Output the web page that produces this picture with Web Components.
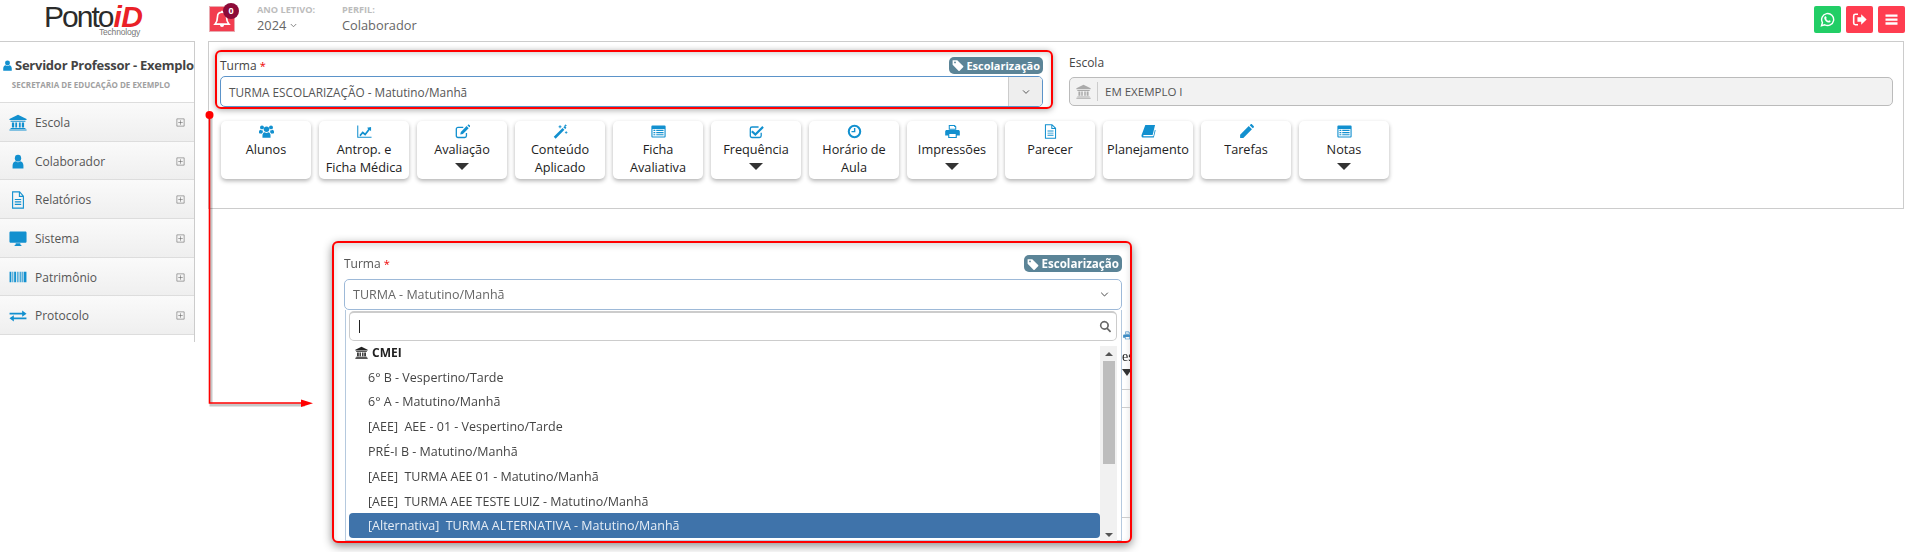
<!DOCTYPE html>
<html lang="pt-BR">
<head>
<meta charset="utf-8">
<title>Ponto iD</title>
<style>
html,body{margin:0;padding:0;height:552px;overflow:hidden;background:#fff}
body{font-family:"Open Sans","Liberation Sans",sans-serif;color:#333}
</style>
</head>
<body>
<pid-app></pid-app>

<script>
const ICONS = {
  user: '<circle cx="8" cy="4.4" r="3.6"/><path d="M1.8 15.5v-3.2c0-2.6 1.6-4.3 3.5-4.6a4.2 4.2 0 0 0 5.4 0c1.9.3 3.5 2 3.5 4.6v3.2z"/>',
  bank: '<path d="M8 .8 15.6 4.6V5.6H.4V4.6z"/><path d="M1.4 6.4h13.2v1H1.4zM2.6 8h2v4.6h-2zM5.6 8h1.6v4.6H5.6zM8.8 8h1.6v4.6H8.8zM11.4 8h2v4.6h-2zM1.4 13.2h13.2v1H1.4zM.4 14.6h15.2v1H.4z"/>',
  file: '<path fill="none" stroke="currentColor" stroke-width="1.1" d="M2.6.8h7l3.8 3.8v10.6H2.6zM9.4 1v3.8h3.8"/><path d="M4.8 7h6.4v1H4.8zM4.8 9.2h6.4v1H4.8zM4.8 11.4h6.4v1H4.8z"/>',
  desktop: '<path d="M1.6 1.4h12.8c.7 0 1.2.5 1.2 1.2v8.2c0 .7-.5 1.2-1.2 1.2H1.6c-.7 0-1.2-.5-1.2-1.2V2.6c0-.7.5-1.2 1.2-1.2zM6 12.4h4l.3 1.6H11v1H5v-1h.7z"/>',
  barcode: '<path d="M.5 2h1.6v12H.5zM3 2h.8v12H3zM4.6 2h1.6v12H4.6zM7 2h.7v12H7zM8.5 2h.7v12h-.7zM10 2h1v12h-1zM11.8 2h.6v12h-.6zM13 2h2.5v12H13z"/>',
  exchange: '<path d="M.5 4.4h11.2V1.8L15.6 5.4l-3.9 3.4V6.4H.5zM15.5 9.6H4.3V7.2L.4 10.6l3.9 3.6v-2.6h11.2z"/>',
  users: '<circle cx="8" cy="5.6" r="2.9"/><path d="M3.7 14.6v-2.4c0-2 1.1-3 2.4-3.3a3.3 3.3 0 0 0 3.8 0c1.3.3 2.4 1.3 2.4 3.3v2.4z"/><circle cx="3.2" cy="3.6" r="2.1"/><circle cx="12.8" cy="3.6" r="2.1"/><path d="M0 9.8V8.2c0-1.3.7-2 1.6-2.2a2.3 2.3 0 0 0 2 .5c0 1 .4 1.7 1 2.3-.9.3-1.5.8-1.9 1.6zM16 9.8V8.2c0-1.3-.7-2-1.6-2.2a2.3 2.3 0 0 1-2 .5c0 1-.4 1.7-1 2.3.9.3 1.5.8 1.9 1.6z"/>',
  chart: '<path d="M.8 1.5v12.7h14.7" fill="none" stroke="currentColor" stroke-width="1.1"/><path d="M2.6 11.8 6 7.6l2.6 2.2 3.4-4.6-1.3-1.1 4.3-.9v4.4l-1.4-1.2-4.8 6.1-2.6-2.2-2.6 3z"/>',
  edit: '<path fill="none" stroke="currentColor" stroke-width="1.4" d="M12.2 9.6v3c0 1-.8 1.8-1.8 1.8H3.2c-1 0-1.8-.8-1.8-1.8V5.4c0-1 .8-1.8 1.8-1.8h5.6"/><path d="M6.2 8.4 12.4 2.2l2.2 2.2-6.2 6.2-2.8.6zM13.2 1.4l.7-.7c.3-.3.8-.3 1.1 0l1 1c.3.3.3.8 0 1.1l-.7.7z"/>',
  magic: '<path d="M.8 13.6 10.2 4.2l2 2-9.4 9.4zM11 3.4l1.4-1.4 2 2L13 5.4z"/><path d="M7 1.4h1v1h1v1H8v1H7v-1H6v-1h1zM13.6 7.6h.9v.9h.9v.9h-.9v.9h-.9v-.9h-.9v-.9h.9zM13 .4h.8v.8h.8V2h-.8v.8H13V2h-.8v-.8h.8z"/>',
  list: '<path fill-rule="evenodd" d="M1.4 1.6h13.2c.6 0 1 .4 1 1v10.8c0 .6-.4 1-1 1H1.4c-.6 0-1-.4-1-1V2.6c0-.6.4-1 1-1zM1.6 5.2v8h12.8v-8zM2.6 6.2h2v1.3h-2zM5.6 6.2h7.8v1.3H5.6zM2.6 8.5h2v1.3h-2zM5.6 8.5h7.8v1.3H5.6zM2.6 10.8h2v1.3h-2zM5.6 10.8h7.8v1.3H5.6z"/>',
  check: '<path fill="none" stroke="currentColor" stroke-width="1.4" d="M13 9.4v3.2c0 1-.8 1.8-1.8 1.8H3.2c-1 0-1.8-.8-1.8-1.8V5c0-1 .8-1.8 1.8-1.8h7"/><path d="M3.8 6.8 6.8 9.6 14.2 2.2l1.6 1.7-9 9-4.6-4.5z"/>',
  clock: '<path fill-rule="evenodd" d="M8 .8a7.2 7.2 0 1 1 0 14.4A7.2 7.2 0 0 1 8 .8zm0 2.2a5 5 0 1 0 0 10A5 5 0 0 0 8 3z"/><path d="M7.4 4.2h1.5v4.6H4.8V7.4h2.6z"/>',
  print: '<path d="M4 1h6.4L12 2.6V6H4zM5.1 2.1v2.9h5.8V3.2H9.8V2.1z" fill-rule="evenodd"/><path fill-rule="evenodd" d="M1.8 6.4h12.4c.9 0 1.6.7 1.6 1.6v4.2H12.6v2.6H3.4v-2.6H.2V8c0-.9.7-1.6 1.6-1.6zM4.6 10.6v3.2h6.8v-3.2z"/>',
  book: '<path d="M4.6 1H15l-2.6 10.8H3.2c-1 0-1.2 1.1-.4 1.3h10.4l1.6-7 .8.6-1.9 7.7H2.6C1 14.4.2 13.2.6 11.6z"/>',
  pencil: '<path d="M1.2 11.4 10.4 2.2l3.4 3.4-9.2 9.2H1.2zM11.4 1.2l.9-.8c.5-.5 1.2-.5 1.7 0l1.6 1.6c.5.5.5 1.2 0 1.7l-.9.9z"/>',
  tag: '<path fill-rule="evenodd" d="M1 1.6h6l7.8 7.8c.5.5.5 1.1 0 1.6l-4.6 4.6c-.5.5-1.1.5-1.6 0L.8 7.8V2c0-.2 0-.4.2-.4zM4 3.4a1.2 1.2 0 1 0 0 2.4 1.2 1.2 0 0 0 0-2.4z"/>',
  whatsapp: '<path fill="none" stroke="currentColor" stroke-width="1.5" d="M1.6 14.6l1-3.4a6.4 6.4 0 1 1 2.4 2.4z"/><path d="M5.8 4.6c.4 0 .6 0 .7.3l.6 1.4c0 .3-.5.8-.6 1 .5 1 1.2 1.7 2.3 2.2.3-.2.6-.8.9-.8l1.4.7c.2.1.2.4.1.8-.2.7-1 1.1-1.7 1.1-2.4-.3-4.6-2.4-5-4.7 0-.9.5-1.8 1.3-2z"/>',
  signout: '<path fill="none" stroke="currentColor" stroke-width="1.7" d="M6.4 2.4H3.6c-1.1 0-1.8.7-1.8 1.8v7.6c0 1.1.7 1.8 1.8 1.8h2.8"/><path d="M5.8 5.6h4V2.4L15.6 8l-5.8 5.6v-3.2h-4z"/>',
  bars: '<path d="M1.6 2.6h12.8v2.5H1.6zM1.6 6.8h12.8v2.5H1.6zM1.6 11h12.8v2.5H1.6z"/>',
  bell: '<path fill="none" stroke="currentColor" stroke-width="1.5" d="M8 2c2.6 0 4 1.8 4 4 0 3.6 1 5.2 2.2 6.6H1.8C3 11.2 4 9.6 4 6c0-2.2 1.4-4 4-4z"/><path d="M7.2.6h1.6v1.6H7.2zM6.2 13.4h3.6a1.8 1.8 0 0 1-3.6 0z"/>',
  search: '<path fill-rule="evenodd" d="M6.6 1a5.6 5.6 0 0 1 4.5 8.9l3.9 3.9-1.5 1.5-3.9-3.9A5.6 5.6 0 1 1 6.6 1zm0 2a3.6 3.6 0 1 0 0 7.2 3.6 3.6 0 0 0 0-7.2z"/>',
  chevron: '<path fill="none" stroke="currentColor" stroke-width="1.4" d="M3.2 5.4 8 10.2l4.8-4.8"/>',
  plus: '<path fill="none" stroke="currentColor" stroke-width="1" d="M1.5 1.5h13v13h-13zM8 4v8M4 8h8"/>'
};

class PidIcon extends HTMLElement {
  constructor() {
    super();
    this.attachShadow({ mode: 'open' });
  }
  connectedCallback() {
    const size = this.getAttribute('size') || 16;
    this.shadowRoot.innerHTML = `
      <style>
:host{display:inline-flex;width:${size}px;height:${size}px;flex:none;color:inherit}
svg{display:block;width:100%;height:100%;fill:currentColor}
      </style>
      <svg viewBox="0 0 16 16" preserveAspectRatio="none">${ICONS[this.getAttribute('name')] || ''}</svg>`;
  }
}
customElements.define('pid-icon', PidIcon);

class PidLogo extends HTMLElement {
  constructor() {
    super();
    this.attachShadow({ mode: 'open' });
    this.shadowRoot.innerHTML = `
      <style>
:host{display:block;position:relative;width:100px;height:36px;font-family:"Liberation Sans",sans-serif}
.brand{display:flex;align-items:baseline;font-size:30px;line-height:27px;letter-spacing:-2px;color:#2b2b2b}
.id{color:#ea2127;font-weight:700;font-style:italic;font-size:30px;margin-left:1px;letter-spacing:-.5px}
.tech{position:absolute;right:4px;top:24px;font-size:8.5px;line-height:10px;color:#777;letter-spacing:-.2px}
      </style>
      <div class="brand">Ponto<span class="id">iD</span></div>
      <div class="tech">Technology</div>`;
  }
}
customElements.define('pid-logo', PidLogo);

class PidTopbar extends HTMLElement {
  constructor() {
    super();
    this.attachShadow({ mode: 'open' });
    this.shadowRoot.innerHTML = `
      <style>
:host{display:grid;grid-template-columns:209px 48px 85px 1fr auto;height:41px;box-sizing:border-box;background:#fff}
.logo{padding:3px 0 0 44px}
.bell-wrap{padding-top:6px;position:relative}
.bell{width:26px;height:26px;background:#f23d4f;color:#fff;display:flex;align-items:center;justify-content:center;box-sizing:border-box;border:1px solid #e9aab0}
.count{position:absolute;left:14px;top:3px;width:16px;height:16px;border-radius:50%;background:#8c0a38;color:#fff;font-size:9px;font-weight:700;line-height:16px;text-align:center}
.meta{padding-top:3px}
.meta b{display:block;font-size:9.2px;line-height:13px;color:#bcbcbc;font-weight:700;white-space:nowrap}
.meta span{display:flex;align-items:center;gap:3px;font-size:12.8px;line-height:18px;color:#666;margin-top:0}
.meta pid-icon{color:#666}
.actions{display:flex;gap:5px;padding:6px 6px 0 0}
.btn{width:27px;height:27px;border-radius:2px;display:flex;align-items:center;justify-content:center;color:#fff;background:#ff3d50}
.btn.green{background:#22ce66}
      </style>
      <div class="logo"><pid-logo></pid-logo></div>
      <div class="bell-wrap">
        <div class="bell"><pid-icon name="bell" size="18"></pid-icon></div>
        <div class="count">0</div>
      </div>
      <div class="meta"><b>ANO LETIVO:</b><span>2024 <pid-icon name="chevron" size="9"></pid-icon></span></div>
      <div class="meta"><b>PERFIL:</b><span>Colaborador</span></div>
      <div class="actions">
        <div class="btn green"><pid-icon name="whatsapp" size="15"></pid-icon></div>
        <div class="btn"><pid-icon name="signout" size="15"></pid-icon></div>
        <div class="btn"><pid-icon name="bars" size="15"></pid-icon></div>
      </div>`;
  }
}
customElements.define('pid-topbar', PidTopbar);

class PidMenuItem extends HTMLElement {
  constructor() {
    super();
    this.attachShadow({ mode: 'open' });
  }
  connectedCallback() {
    const w = this.getAttribute('w') || 18;
    const h = this.getAttribute('h') || 17;
    this.shadowRoot.innerHTML = `
      <style>
:host{display:flex;align-items:center;flex:1;box-sizing:border-box;border-top:1px solid #ddd;padding-top:1px;background:linear-gradient(#fafafa,#efefef);font-size:12px;color:#555}
.ico{width:35px;display:flex;justify-content:center;color:#1290cf;box-sizing:border-box}
.txt{flex:1}
.plus{color:#666;margin-right:9px}
      </style>
      <div class="ico"><pid-icon name="${this.getAttribute('icon')}" size="${w}" style="height:${h}px"></pid-icon></div>
      <div class="txt"><slot></slot></div>
      <pid-icon class="plus" name="plus" size="9"></pid-icon>`;
  }
}
customElements.define('pid-menu-item', PidMenuItem);

class PidSidebar extends HTMLElement {
  constructor() {
    super();
    this.attachShadow({ mode: 'open' });
    this.shadowRoot.innerHTML = `
      <style>
:host{display:flex;flex-direction:column;width:195px;height:301px;box-sizing:border-box;border-top:1px solid #ccc;border-right:1px solid #ccc;background:#fff;overflow:hidden}
.who{height:60px;box-sizing:border-box;padding-top:13px;flex:none}
.name{display:flex;align-items:center;gap:2px;padding-left:2px;font-size:13px;letter-spacing:-.25px;line-height:20px;font-weight:700;color:#444;white-space:nowrap}
.name pid-icon{color:#1290cf}
.org{font-size:8px;line-height:12px;font-weight:700;color:#a0a0a0;text-align:center;margin-top:4px;padding-right:12px;white-space:nowrap}
.rows{flex:1;display:flex;flex-direction:column;border-bottom:1px solid #ddd;margin-bottom:7px}
      </style>
      <div class="who">
        <div class="name"><pid-icon name="user" size="11"></pid-icon>Servidor Professor - Exemplo</div>
        <div class="org">SECRETARIA DE EDUCAÇÃO DE EXEMPLO</div>
      </div>
      <div class="rows"><slot></slot></div>`;
  }
}
customElements.define('pid-sidebar', PidSidebar);

class PidBadge extends HTMLElement {
  constructor() {
    super();
    this.attachShadow({ mode: 'open' });
    this.shadowRoot.innerHTML = `
      <style>
:host{display:inline-flex;align-items:center;gap:2px;height:17px;padding:0 3px;box-sizing:border-box;border-radius:5px;background:#5b8497;color:#fff;font-size:var(--badge-size,11px);font-weight:700;white-space:nowrap}
      </style>
      <pid-icon name="tag" size="12"></pid-icon>Escolarização`;
  }
}
customElements.define('pid-badge', PidBadge);

class PidToolButton extends HTMLElement {
  constructor() {
    super();
    this.attachShadow({ mode: 'open' });
  }
  connectedCallback() {
    const caret = this.hasAttribute('caret') ? '<div class="caret"></div>' : '';
    this.shadowRoot.innerHTML = `
      <style>
:host{display:flex;flex-direction:column;align-items:center;width:90px;height:58px;box-sizing:border-box;padding-top:3px;background:#fff;border-radius:5px;box-shadow:0 2px 4px rgba(0,0,0,.3);font-size:12.7px;line-height:18px;color:#222;text-align:center}
pid-icon{color:#1290cf;margin-bottom:1px}
.caret{width:0;height:0;border:7px solid transparent;border-top:7px solid #333;border-bottom:0;margin-top:5px}
      </style>
      <pid-icon name="${this.getAttribute('icon')}" size="15"></pid-icon>
      <div><slot></slot></div>${caret}`;
  }
}
customElements.define('pid-tool-button', PidToolButton);

class PidMain extends HTMLElement {
  constructor() {
    super();
    this.attachShadow({ mode: 'open' });
    this.shadowRoot.innerHTML = `
      <style>
:host{display:block;box-sizing:border-box;height:168px;margin:0 7px 0 13px;border:1px solid #ccc;padding:8px 10px 0 6px;background:#fff;font-size:13px}
.form{display:grid;grid-template-columns:838px 1fr;column-gap:16px}
.turma{box-sizing:border-box;height:59px;border:2px solid #f00;border-radius:6px;padding:2px 8px 0 3px;box-shadow:0 1px 6px rgba(0,0,0,.35),inset 0 2px 5px rgba(0,0,0,.16)}
.head{display:flex;justify-content:space-between;align-items:center;height:22px}
label{font-size:12px;color:#444;line-height:17px}
label i{color:#e00;font-style:normal;font-size:11px}
.select{display:flex;height:31px;box-sizing:border-box;border:1px solid #5b93c9;border-radius:5px;align-items:center;color:#555;font-size:11.8px}
.select span{flex:1;padding-left:8px}
.drop{width:33px;height:100%;background:#eee;border-left:1px solid #ccc;display:flex;align-items:center;justify-content:center;color:#444;border-radius:0 4px 4px 0}
.school{padding-top:3px}
.school label{display:block;height:24px;line-height:20px}
.ro{display:flex;height:29px;box-sizing:border-box;border:1px solid #bbb;border-radius:5px;background:#f2f2f2;align-items:center;color:#555;font-size:11.5px}
.ro .i{width:27px;height:19px;display:flex;align-items:center;justify-content:center;color:#aaa;border-right:1px solid #ccc;margin-right:7px}
.tools{display:flex;gap:8px;margin:12px 0 0 6px}
      </style>
      <div class="form">
        <div class="turma">
          <div class="head"><label>Turma <i>*</i></label><pid-badge></pid-badge></div>
          <div class="select"><span>TURMA ESCOLARIZAÇÃO - Matutino/Manhã</span><div class="drop"><pid-icon name="chevron" size="10"></pid-icon></div></div>
        </div>
        <div class="school">
          <label>Escola</label>
          <div class="ro"><div class="i"><pid-icon name="bank" size="15"></pid-icon></div>EM EXEMPLO I</div>
        </div>
      </div>
      <div class="tools"><slot></slot></div>`;
  }
}
customElements.define('pid-main', PidMain);

class PidOption extends HTMLElement {
  constructor() {
    super();
    this.attachShadow({ mode: 'open' });
    this.shadowRoot.innerHTML = `
      <style>
:host{display:flex;align-items:center;height:24.8px;box-sizing:border-box;padding-left:19px;border-radius:4px;font-size:12.5px;color:#444;white-space:pre}
:host([selected]){background:#3f73aa;color:#e6edf5}
      </style>
      <slot></slot>`;
  }
}
customElements.define('pid-option', PidOption);

class PidInset extends HTMLElement {
  constructor() {
    super();
    this.attachShadow({ mode: 'open' });
    this.shadowRoot.innerHTML = `
      <style>
:host{position:absolute;left:332px;top:241px;width:800px;height:302px;box-sizing:border-box;border:2px solid #f00;border-radius:6px;background:#fff;box-shadow:0 3px 10px rgba(0,0,0,.45),inset 0 3px 6px rgba(0,0,0,.14);font-size:12.5px;color:#555;--badge-size:11.6px}
.blur{filter:blur(.35px);height:100%;position:relative;overflow:hidden;border-radius:5px}
.head{display:flex;justify-content:space-between;align-items:center;padding:12px 8px 0 10px;height:17px}
label{color:#555;font-size:12px}
label i{color:#e00;font-style:normal;font-size:11px}
.select{display:flex;align-items:center;justify-content:space-between;height:31px;box-sizing:border-box;margin:7px 8px 0 10px;padding:0 11px 0 8px;border:1px solid #9db9d8;border-radius:5px;color:#666}
.select pid-icon{color:#444}
.panel{margin:0 8px 0 11px;height:231px;box-sizing:border-box;border:1px solid #b5c9de;border-top:0;padding:1px 4px 0 3px;background:#fff}
.search{display:flex;align-items:center;justify-content:space-between;height:30px;box-sizing:border-box;border:1px solid #ccc;border-top-width:2px;border-radius:5px;padding:0 4px 0 9px;color:#666}
.caret{width:1px;height:13px;background:#222}
.list{display:grid;grid-template-columns:1fr 17px;margin-top:-1px}
.group{display:flex;align-items:center;gap:4px;height:24.7px;padding-left:6px;font-size:12px;font-weight:700;color:#222}
.bar{display:flex;flex-direction:column;align-items:center;background:#f1f1f1;height:197px;margin-top:6px}
.thumb{width:12px;height:103px;background:#bdbdbd;margin-top:5px}
.up,.dn{width:0;height:0;border:4px solid transparent}
.up{border-top:0;border-bottom:4px solid #555;margin-top:6px}
.dn{border-bottom:0;border-top:4px solid #555;margin-top:auto;margin-bottom:6px}
.behind{position:absolute;right:0;top:0;width:8px;height:100%;overflow:hidden;font:14px "Liberation Serif",serif;color:#222}
.behind .ic{position:absolute;left:1px;top:88px;color:#3f8cc4}
.behind .es{position:absolute;left:0;top:106px}
.behind .tri{position:absolute;left:0;top:126px;width:0;height:0;border:5px solid transparent;border-top:7px solid #333;border-bottom:0}
.behind hr{position:absolute;left:0;width:100%;margin:0;border:0;border-top:1px solid #ccc}
      </style>
      <div class="blur">
        <div class="head"><label>Turma <i>*</i></label><pid-badge></pid-badge></div>
        <div class="select"><span>TURMA - Matutino/Manhã</span><pid-icon name="chevron" size="11"></pid-icon></div>
        <div class="panel">
          <div class="search"><div class="caret"></div><pid-icon name="search" size="13"></pid-icon></div>
          <div class="list">
            <div>
              <div class="group"><pid-icon name="bank" size="13"></pid-icon>CMEI</div>
              <slot></slot>
            </div>
            <div class="bar"><div class="up"></div><div class="thumb"></div><div class="dn"></div></div>
          </div>
        </div>
        <div class="behind">
          <pid-icon class="ic" name="print" size="9"></pid-icon>
          <div class="es">es</div>
          <div class="tri"></div>
          <hr style="top:146px"><hr style="top:164px"><hr style="top:274px">
        </div>
      </div>`;
  }
}
customElements.define('pid-inset', PidInset);

class PidConnector extends HTMLElement {
  constructor() {
    super();
    this.attachShadow({ mode: 'open' });
    this.shadowRoot.innerHTML = `
      <style>
:host{position:absolute;left:200px;top:105px;width:120px;height:305px}
svg{display:block;overflow:visible}
      </style>
      <svg width="120" height="305" viewBox="200 105 120 305">
        <polyline points="211,116 211,405 305,405" fill="none" stroke="#000" stroke-opacity=".22" stroke-width="3"/>
        <polyline points="209.5,115 209.5,403 303,403" fill="none" stroke="#f00" stroke-width="1.6"/>
        <circle cx="209.5" cy="115" r="4" fill="#f00"/>
        <path d="M301 399.5 313 403.3 301 407z" fill="#f00"/>
      </svg>`;
  }
}
customElements.define('pid-connector', PidConnector);

class PidApp extends HTMLElement {
  constructor() {
    super();
    this.attachShadow({ mode: 'open' });
    this.shadowRoot.innerHTML = `
      <style>
:host{display:block;position:relative;width:1911px;height:552px;overflow:hidden;background:#fff}
.body{display:grid;grid-template-columns:195px 1fr;align-items:start}
      </style>
      <pid-topbar></pid-topbar>
      <div class="body">
        <pid-sidebar>
          <pid-menu-item icon="bank">Escola</pid-menu-item>
          <pid-menu-item icon="user" w="14" h="15">Colaborador</pid-menu-item>
          <pid-menu-item icon="file" w="16" h="18">Relatórios</pid-menu-item>
          <pid-menu-item icon="desktop">Sistema</pid-menu-item>
          <pid-menu-item icon="barcode" h="14">Patrimônio</pid-menu-item>
          <pid-menu-item icon="exchange" h="14">Protocolo</pid-menu-item>
        </pid-sidebar>
        <pid-main>
          <pid-tool-button icon="users">Alunos</pid-tool-button>
          <pid-tool-button icon="chart">Antrop. e<br>Ficha Médica</pid-tool-button>
          <pid-tool-button icon="edit" caret>Avaliação</pid-tool-button>
          <pid-tool-button icon="magic">Conteúdo<br>Aplicado</pid-tool-button>
          <pid-tool-button icon="list">Ficha<br>Avaliativa</pid-tool-button>
          <pid-tool-button icon="check" caret>Frequência</pid-tool-button>
          <pid-tool-button icon="clock">Horário de<br>Aula</pid-tool-button>
          <pid-tool-button icon="print" caret>Impressões</pid-tool-button>
          <pid-tool-button icon="file">Parecer</pid-tool-button>
          <pid-tool-button icon="book">Planejamento</pid-tool-button>
          <pid-tool-button icon="pencil">Tarefas</pid-tool-button>
          <pid-tool-button icon="list" caret>Notas</pid-tool-button>
        </pid-main>
      </div>
      <pid-connector></pid-connector>
      <pid-inset>
        <pid-option>6° B - Vespertino/Tarde</pid-option>
        <pid-option>6° A - Matutino/Manhã</pid-option>
        <pid-option>[AEE]  AEE - 01 - Vespertino/Tarde</pid-option>
        <pid-option>PRÉ-I B - Matutino/Manhã</pid-option>
        <pid-option>[AEE]  TURMA AEE 01 - Matutino/Manhã</pid-option>
        <pid-option>[AEE]  TURMA AEE TESTE LUIZ - Matutino/Manhã</pid-option>
        <pid-option selected>[Alternativa]  TURMA ALTERNATIVA - Matutino/Manhã</pid-option>
      </pid-inset>`;
  }
}
customElements.define('pid-app', PidApp);
</script>
</body>
</html>
